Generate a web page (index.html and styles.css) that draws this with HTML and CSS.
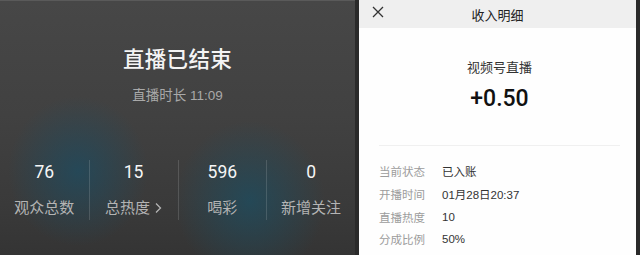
FILE: index.html
```html
<!DOCTYPE html>
<html lang="zh">
<head>
<meta charset="utf-8">
<title>直播已结束</title>
<link rel="stylesheet" href="styles.css">
</head>
<body>
<div class="screen">
  <section class="live">
    <h1 class="live-title">直播已结束</h1>
    <p class="live-duration">直播时长 11:09</p>
    <div class="stats">
      <div class="stat">
        <div class="stat-num">76</div>
        <div class="stat-label">观众总数</div>
      </div>
      <div class="stat">
        <div class="stat-num">15</div>
        <div class="stat-label">总热度<svg class="chev" width="8" height="12" viewBox="0 0 8 12"><path d="M2 1.5 L6.5 6 L2 10.5" fill="none" stroke="currentColor" stroke-width="1.3"/></svg></div>
      </div>
      <div class="stat">
        <div class="stat-num">596</div>
        <div class="stat-label">喝彩</div>
      </div>
      <div class="stat">
        <div class="stat-num">0</div>
        <div class="stat-label">新增关注</div>
      </div>
    </div>
  </section>
  <section class="income">
    <header class="income-head">
      <svg class="close" width="12" height="12" viewBox="0 0 12 12"><path d="M1 1 L11 11 M11 1 L1 11" stroke="#333" stroke-width="1.3" fill="none"/></svg>
      <span class="income-title">收入明细</span>
    </header>
    <div class="income-body">
      <div class="source">视频号直播</div>
      <div class="amount">+0.50</div>
      <div class="rule"></div>
      <dl class="details">
        <div class="row"><dt>当前状态</dt><dd>已入账</dd></div>
        <div class="row"><dt>开播时间</dt><dd>01月28日20:37</dd></div>
        <div class="row"><dt>直播热度</dt><dd>10</dd></div>
        <div class="row"><dt>分成比例</dt><dd>50%</dd></div>
      </dl>
    </div>
  </section>
</div>
</body>
</html>
```
FILE: styles.css
```css
* { box-sizing: border-box; }
html, body { margin: 0; padding: 0; }
body {
  width: 640px;
  height: 255px;
  overflow: hidden;
  background: #2a2a2a;
  font-family: "Liberation Sans", "Noto Sans CJK SC", sans-serif;
}
.screen {
  display: flex;
  width: 640px;
  height: 255px;
  gap: 4px;
}
.live {
  width: 355px;
  height: 255px;
  display: flex;
  flex-direction: column;
  align-items: center;
  color: #fff;
  border-top: 1px solid #5a5a5a;
  background:
    radial-gradient(ellipse 70px 75px at 78px 170px, rgba(25, 78, 102, 0.65), rgba(25, 78, 102, 0) 100%),
    radial-gradient(ellipse 75px 80px at 250px 200px, rgba(25, 80, 102, 0.65), rgba(25, 80, 102, 0) 100%),
    linear-gradient(180deg, #474747 0%, #414141 45%, #3a3a3a 80%, #343434 100%);
}
.live-title {
  margin: 44px 0 0;
  font-size: 21.5px;
  line-height: 30px;
  font-weight: 500;
  letter-spacing: 0.3px;
  color: #f4f4f4;
}
.live-duration {
  margin: 11px 0 0;
  font-size: 13.5px;
  line-height: 20px;
  color: #a9a9a9;
}
.stats {
  margin-top: 54px;
  width: 100%;
  display: grid;
  grid-template-columns: repeat(4, 1fr);
}
.stat {
  display: flex;
  flex-direction: column;
  align-items: center;
}
.stat + .stat {
  border-left: 1px solid rgba(255, 255, 255, 0.14);
}
.stat-num {
  font-family: Roboto, "Liberation Sans", sans-serif;
  font-weight: 400;
  font-size: 17.5px;
  line-height: 24px;
  color: #f6f6f6;
}
.stat-label {
  margin-top: 12px;
  font-size: 15px;
  line-height: 24px;
  color: #b4b4b4;
  display: flex;
  align-items: center;
}
.chev { margin-left: 4px; color: #b4b4b4; }
.income {
  width: 277px;
  height: 255px;
  background: #fefefe;
  display: flex;
  flex-direction: column;
}
.income-head {
  position: relative;
  height: 28px;
  background: #efefef;
  display: flex;
  align-items: center;
  justify-content: center;
}
.close {
  position: absolute;
  left: 13px;
  top: 6px;
}
.income-title {
  font-size: 13px;
  color: #222;
}
.income-body {
  padding: 0 16px 0 20px;
  display: flex;
  flex-direction: column;
}
.source {
  margin-top: 30px;
  text-align: center;
  font-size: 13px;
  line-height: 20px;
  color: #333;
}
.amount {
  margin-top: 6px;
  text-align: center;
  font-family: Roboto, "Liberation Sans", sans-serif;
  font-size: 23px;
  line-height: 30px;
  font-weight: 500;
  color: #111;
}
.rule {
  margin-top: 31px;
  height: 1px;
  background: #f0f0f0;
}
.details {
  margin: 14px 0 0;
}
.row {
  display: flex;
  height: 22.7px;
  align-items: center;
  font-size: 11.5px;
}
.row dt {
  width: 63px;
  color: #9c9c9c;
}
.row dd {
  margin: 0;
  color: #333;
}
```
